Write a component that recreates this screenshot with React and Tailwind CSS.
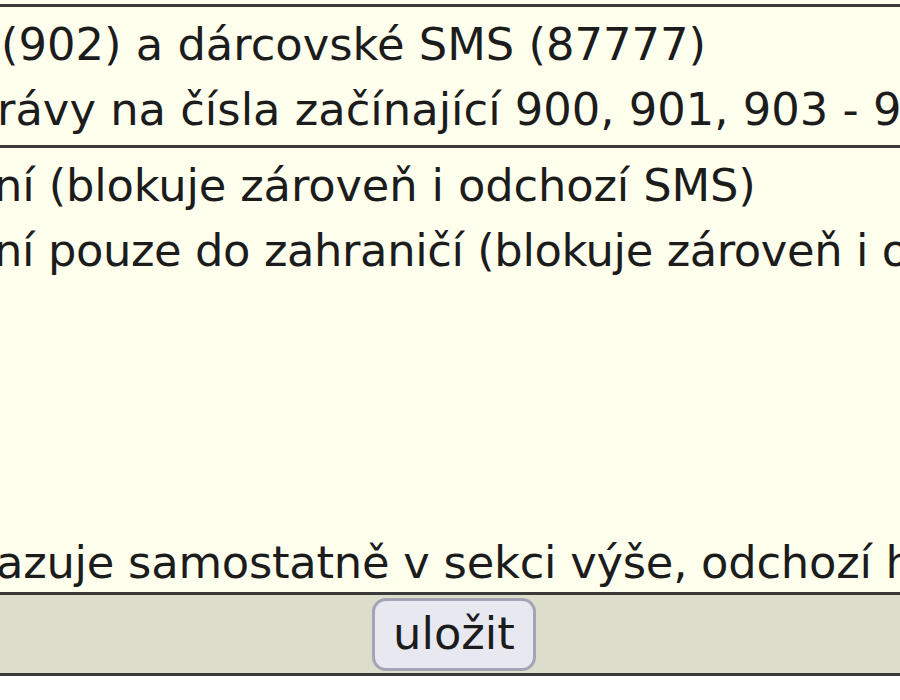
import React from 'react';

const rowCls = 'h-[65px] leading-[65px] whitespace-nowrap';

export default function App() {
  return (
    <div className="w-[900px] h-[700px] overflow-hidden bg-white text-[#1c1c1c] text-[44.8px] font-['DejaVu_Sans','Verdana',sans-serif]">
      <div className="h-[4px] bg-[#ffffee]" />
      {/* odchozí */}
      <div className="bg-[#ffffee] border-y-[3px] border-[#3a3a3a] pt-[5px] pb-[3px]">
        <div className={`${rowCls} ml-[1px]`}>(902) a dárcovské SMS (87777)</div>
        <div className={`${rowCls} -ml-[3px]`}>rávy na čísla začínající 900, 901, 903 - 909</div>
      </div>
      {/* příchozí */}
      <div className="bg-[#ffffee] border-b-[3px] border-[#3a3a3a] pt-[5px] pb-[3px]">
        <div className={`${rowCls} -ml-[6px] tracking-[-0.15px]`}>ní (blokuje zároveň i odchozí SMS)</div>
        <div className={`${rowCls} -ml-[6px] tracking-[-0.4px]`}>ní pouze do zahraničí (blokuje zároveň i odchozí SMS)</div>
        <div className="h-[254px]" />
        <div className="whitespace-nowrap -ml-[4px] leading-[52px] tracking-[-0.25px]">
          azuje samostatně v sekci výše, odchozí hovory se blokují
        </div>
      </div>
      <div className="bg-[#ddddcc] border-b-[3px] border-[#3a3a3a] h-[81px] flex items-center justify-center pl-[8px]">
        <button className="h-[73px] px-[18px] border-[3px] border-[#a4a4b4] rounded-[14px] bg-[#e8e8f0] text-[44.8px] leading-none text-[#1c1c1c]">
          uložit
        </button>
      </div>
    </div>
  );
}
